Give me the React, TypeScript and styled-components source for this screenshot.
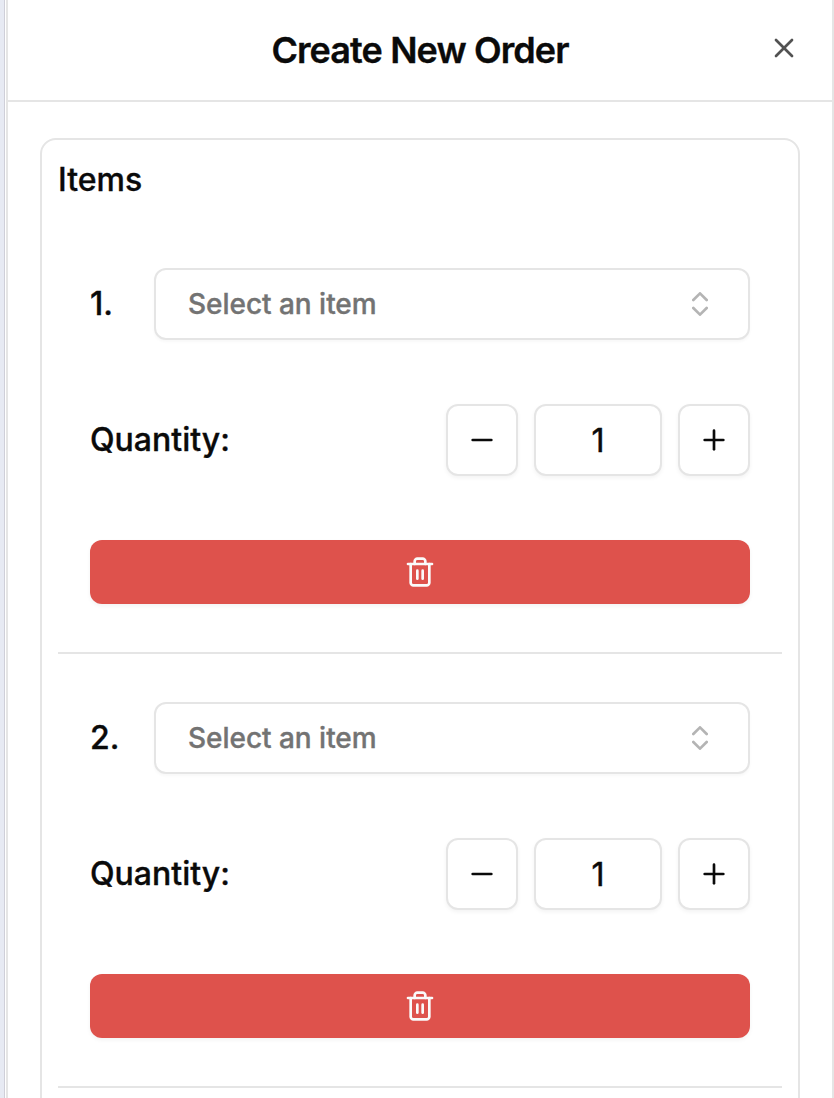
import React from "react";
import styled, { createGlobalStyle } from "styled-components";
import { ChevronsUpDown, Minus, Plus, X } from "lucide-react";

const GlobalStyle = createGlobalStyle`
  *, *::before, *::after { box-sizing: border-box; }
  body {
    margin: 0;
    background: #fff;
    color: #0a0a0a;
    font-family: Inter, "Liberation Sans", sans-serif;
    -webkit-text-stroke: 0.35px currentColor;
    overflow: hidden;
  }
  button, input { font: inherit; color: inherit; margin: 0; }
`;

const line = "#e5e5e5";
const shadow = "0 2px 4px rgba(0, 0, 0, 0.05)";
const faintShadow = "0 2px 3px rgba(0, 0, 0, 0.03)";

const Screen = styled.div`
  display: flex;
  height: 1098px;
  width: 834px;
  overflow: hidden;
`;

const Backdrop = styled.div`
  flex: none;
  width: 5px;
  margin-right: 1px;
  background: #e7eaf3;
  border-right: 1px solid #cfcfd8;
`;

const Dialog = styled.div`
  flex: 1;
  min-width: 0;
  border: solid ${line};
  border-width: 0 2px;
`;

const Header = styled.header`
  display: grid;
  grid-template-columns: 64px 1fr 64px;
  align-items: center;
  height: 102px;
  padding: 0 16px;
  border-bottom: 2px solid ${line};
`;

const Title = styled.h1`
  grid-column: 2;
  margin: 0;
  font-size: 36px;
  line-height: 36px;
  font-weight: 600;
  letter-spacing: -0.025em;
  text-align: center;
`;

const CloseButton = styled.button`
  display: flex;
  justify-self: center;
  margin-bottom: 4px;
  padding: 0;
  border: 0;
  background: none;
  opacity: 0.7;
`;

const Card = styled.section`
  height: 1100px;
  margin: 36px 32px 0;
  padding: 16px;
  border: 2px solid ${line};
  border-radius: 16px;
`;

const CardTitle = styled.h2`
  margin: 0;
  height: 64px;
  font-size: 32px;
  line-height: 48px;
  font-weight: 500;
`;

const ItemRow = styled.div`
  display: flex;
  flex-direction: column;
  gap: 64px;
  padding: 48px 32px;
  border-bottom: 2px solid ${line};
`;

const Line = styled.div`
  display: flex;
  align-items: center;
  font-size: 32px;
  line-height: 48px;
  font-weight: 500;
`;

const Index = styled.span`
  width: 64px;
`;

const SelectButton = styled.button`
  flex: 1;
  display: flex;
  align-items: center;
  justify-content: space-between;
  height: 72px;
  padding: 0 32px;
  border: 2px solid ${line};
  border-radius: 12px;
  background: #fff;
  box-shadow: ${faintShadow};
  color: #737373;
  font-size: 28px;
  font-weight: 500;
  letter-spacing: -0.03px;

  svg { color: #0a0a0a; opacity: 0.3; }
`;

const Stepper = styled.div`
  display: flex;
  gap: 16px;
  margin-left: auto;
`;

const StepButton = styled.button`
  display: flex;
  align-items: center;
  justify-content: center;
  width: 72px;
  height: 72px;
  padding: 0;
  border: 2px solid ${line};
  border-radius: 12px;
  background: #fff;
  box-shadow: ${shadow};
`;

const QuantityInput = styled.input`
  width: 128px;
  height: 72px;
  padding: 0;
  border: 2px solid ${line};
  border-radius: 12px;
  background: #fff;
  box-shadow: ${shadow};
  font-size: 32px;
  font-weight: 400;
  text-align: center;
  -webkit-text-stroke: 0.5px currentColor;
`;

const DeleteButton = styled.button`
  display: flex;
  align-items: center;
  justify-content: center;
  height: 64px;
  border: 0;
  border-radius: 12px;
  background: #de524c;
  color: #fafafa;
  box-shadow: ${shadow};
`;

function TrashIcon() {
  return (
    <svg
      width="32"
      height="32"
      viewBox="0 0 24 24"
      fill="none"
      stroke="currentColor"
      strokeWidth="2"
      strokeLinecap="round"
      strokeLinejoin="round"
    >
      <path d="M3 6h18" />
      <path d="M19 6v14c0 1-1 2-2 2H7c-1 0-2-1-2-2V6" />
      <path d="M8 6V4c0-1 1-2 2-2h4c1 0 2 1 2 2v2" />
      <path d="M10 11v6M14 11v6" />
    </svg>
  );
}

function OrderItem({ index }: { index: number }) {
  return (
    <ItemRow>
      <Line>
        <Index>{index}.</Index>
        <SelectButton type="button">
          Select an item
          <ChevronsUpDown size={32} />
        </SelectButton>
      </Line>
      <Line>
        <span>Quantity:</span>
        <Stepper>
          <StepButton type="button" aria-label="Decrease"><Minus size={32} /></StepButton>
          <QuantityInput defaultValue="1" aria-label="Quantity" />
          <StepButton type="button" aria-label="Increase"><Plus size={32} /></StepButton>
        </Stepper>
      </Line>
      <DeleteButton type="button" aria-label="Remove item"><TrashIcon /></DeleteButton>
    </ItemRow>
  );
}

export default function App() {
  return (
    <Screen>
      <GlobalStyle />
      <Backdrop />
      <Dialog>
        <Header>
          <Title>Create New Order</Title>
          <CloseButton type="button" aria-label="Close"><X size={32} /></CloseButton>
        </Header>
        <Card>
          <CardTitle>Items</CardTitle>
          <OrderItem index={1} />
          <OrderItem index={2} />
        </Card>
      </Dialog>
    </Screen>
  );
}
